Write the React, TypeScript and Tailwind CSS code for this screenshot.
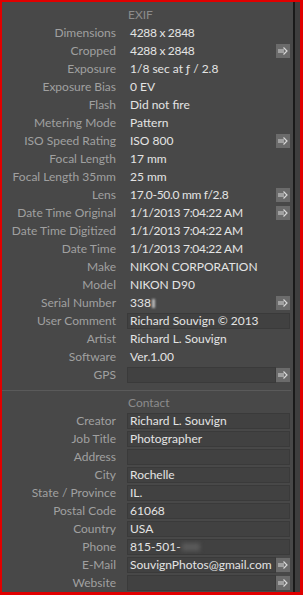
import React from "react";

type Row = { label: string; value?: string; box?: boolean; arrow?: boolean; blur?: boolean; tight?: boolean };

const exif: Row[] = [
  { label: "Dimensions", value: "4288 x 2848", tight: true },
  { label: "Cropped", value: "4288 x 2848", arrow: true, tight: true },
  { label: "Exposure", value: "1/8 sec at \u0192 / 2.8" },
  { label: "Exposure Bias", value: "0 EV" },
  { label: "Flash", value: "Did not fire" },
  { label: "Metering Mode", value: "Pattern" },
  { label: "ISO Speed Rating", value: "ISO 800", arrow: true },
  { label: "Focal Length", value: "17 mm" },
  { label: "Focal Length 35mm", value: "25 mm" },
  { label: "Lens", value: "17.0-50.0 mm f/2.8", arrow: true, tight: true },
  { label: "Date Time Original", value: "1/1/2013 7:04:22 AM", arrow: true, tight: true },
  { label: "Date Time Digitized", value: "1/1/2013 7:04:22 AM", tight: true },
  { label: "Date Time", value: "1/1/2013 7:04:22 AM", tight: true },
  { label: "Make", value: "NIKON CORPORATION" },
  { label: "Model", value: "NIKON D90" },
  { label: "Serial Number", value: "338", arrow: true, blur: true },
  { label: "User Comment", value: "Richard Souvign \u00a9 2013", box: true },
  { label: "Artist", value: "Richard L. Souvign" },
  { label: "Software", value: "Ver.1.00" },
  { label: "GPS", value: "", box: true, arrow: true },
];

const contact: Row[] = [
  { label: "Creator", value: "Richard L. Souvign", box: true },
  { label: "Job Title", value: "Photographer", box: true },
  { label: "Address", value: "", box: true },
  { label: "City", value: "Rochelle", box: true },
  { label: "State / Province", value: "IL.", box: true },
  { label: "Postal Code", value: "61068", box: true },
  { label: "Country", value: "USA", box: true },
  { label: "Phone", value: "815-501-", box: true, blur: true },
  { label: "E-Mail", value: "SouvignPhotos@gmail.com", box: true, arrow: true },
  { label: "Website", value: "", box: true, arrow: true },
];

function Arrow() {
  return (
    <div className="w-[14px] h-[14px] shrink-0 bg-[#6b6b6b] flex items-center justify-center">
      <svg width="12" height="10" viewBox="0 0 12 10">
        <path d="M1 4 H7 M1 6 H7" stroke="#d8d8d8" strokeWidth="1" fill="none" />
        <path d="M6.5 1.5 L10 5 L6.5 8.5" stroke="#d8d8d8" strokeWidth="1.2" fill="none" />
      </svg>
    </div>
  );
}

function RowView({ r }: { r: Row }) {
  return (
    <div className="flex items-center h-[18px]">
      <div className="w-[114px] text-right text-[#a0a0a0] whitespace-nowrap">{r.label}</div>
      <div className="ml-[11px] w-[163px] flex items-center h-[16px]">
        {r.box ? (
          <div className="flex-1 h-[16px] bg-[#414141] border border-[#3a3a3a] flex items-center pl-[2px] text-[#e4e4e4] whitespace-nowrap overflow-hidden">
            {r.value}
            {r.blur && <span className="inline-block w-[18px] h-[8px] bg-[#5a5a5a] blur-[2px] ml-[1px]" />}
          </div>
        ) : (
          <div className={`flex-1 pl-[3px] text-[#e4e4e4] whitespace-nowrap flex items-center ${r.tight ? "tracking-[-0.3px]" : ""}`}>
            {r.value}
            {r.blur && r.label === "Serial Number" && (
              <span className="inline-block w-[3px] h-[9px] bg-[#bbbbbb] blur-[1px] ml-[1px]" />
            )}
          </div>
        )}
        {r.arrow && <Arrow />}
      </div>
    </div>
  );
}

export default function App() {
  return (
    <div className="w-[303px] h-[595px] bg-[#e00000] p-[2px] pr-[3px] pb-[3px]" style={{ fontFamily: 'Lato, sans-serif' }}>
      <div className="w-full h-full flex bg-[#3e3e3e]">
        <div className="w-[291px] h-full bg-[#484848] text-[12px] leading-[18px]">
          <div className="pt-[4px]">
            <div className="h-[18px] pl-[126px] text-[#8c8c8c]">EXIF</div>
            {exif.map((r) => (
              <RowView key={r.label} r={r} />
            ))}
          </div>
          <div className="h-px bg-[#5a5a5a] mt-[6px] mr-[2px]" />
          <div className="pt-[3px]">
            <div className="h-[18px] pl-[126px] text-[#8c8c8c]">Contact</div>
            {contact.map((r) => (
              <RowView key={r.label} r={r} />
            ))}
          </div>
        </div>
        <div className="w-[2px] h-full bg-[#1a1a1a]" />
      </div>
    </div>
  );
}
